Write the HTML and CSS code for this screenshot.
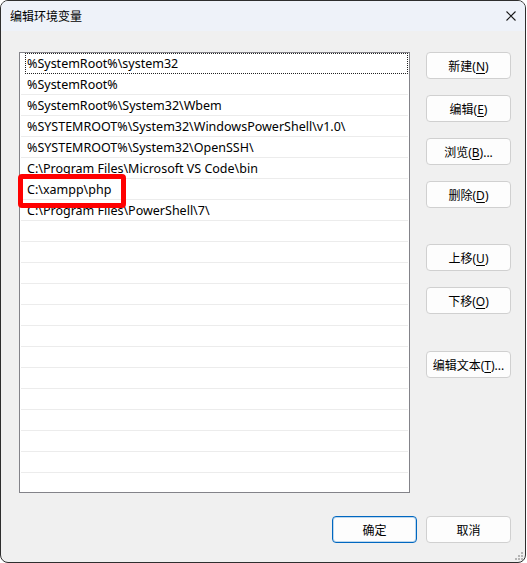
FILE: index.html
```html
<!DOCTYPE html>
<html lang="zh-CN">
<head>
    <meta charset="UTF-8">
    <title>编辑环境变量</title>
    <link rel="stylesheet" href="styles.css">
</head>
<body>
    <div class="window">
        <div class="titlebar">
            <span class="title">编辑环境变量</span>
            <svg class="close" width="10" height="10" viewBox="0 0 10 10">
                <path d="M0.5 0.5 L9.5 9.5 M9.5 0.5 L0.5 9.5" stroke="#1a1a1a" stroke-width="1.1" fill="none"/>
            </svg>
        </div>

        <div class="content">
            <div class="main">
                <div class="list">
                    <div class="row focused">%SystemRoot%\system32</div>
                    <div class="row">%SystemRoot%</div>
                    <div class="row">%SystemRoot%\System32\Wbem</div>
                    <div class="row">%SYSTEMROOT%\System32\WindowsPowerShell\v1.0\</div>
                    <div class="row">%SYSTEMROOT%\System32\OpenSSH\</div>
                    <div class="row">C:\Program Files\Microsoft VS Code\bin</div>
                    <div class="row">C:\xampp\php</div>
                    <div class="row">C:\Program Files\PowerShell\7\</div>
                    <div class="row"></div>
                    <div class="row"></div>
                    <div class="row"></div>
                    <div class="row"></div>
                    <div class="row"></div>
                    <div class="row"></div>
                    <div class="row"></div>
                    <div class="row"></div>
                    <div class="row"></div>
                    <div class="row"></div>
                    <div class="row"></div>
                    <div class="row"></div>
                    <div class="row last"></div>
                </div>

                <div class="side">
                    <button class="btn">新建(<u>N</u>)</button>
                    <button class="btn">编辑(<u>E</u>)</button>
                    <button class="btn">浏览(<u>B</u>)...</button>
                    <button class="btn">删除(<u>D</u>)</button>
                    <button class="btn move-up">上移(<u>U</u>)</button>
                    <button class="btn">下移(<u>O</u>)</button>
                    <button class="btn edit-text">编辑文本(<u>T</u>)...</button>
                </div>
            </div>

            <div class="footer">
                <button class="btn default">确定</button>
                <button class="btn">取消</button>
            </div>
        </div>

        <!-- annotation around the php entry -->
        <div class="highlight"></div>

        <svg class="grip" width="8" height="8" viewBox="0 0 8 8">
            <rect x="6" y="0" width="2" height="2" fill="#b5b5b5"/>
            <rect x="3" y="3" width="2" height="2" fill="#b5b5b5"/>
            <rect x="6" y="3" width="2" height="2" fill="#b5b5b5"/>
            <rect x="0" y="6" width="2" height="2" fill="#b5b5b5"/>
            <rect x="3" y="6" width="2" height="2" fill="#b5b5b5"/>
            <rect x="6" y="6" width="2" height="2" fill="#b5b5b5"/>
        </svg>
    </div>
</body>
</html>
```

FILE: styles.css
```css
* {
    box-sizing: border-box;
}

body {
    margin: 0;
    background: #ffffff;
    font-family: "Noto Sans", "Noto Sans CJK SC", sans-serif;
    font-size: 12px;
    color: #000;
}

.window {
    position: relative;
    width: 526px;
    height: 563px;
    border: 1px solid #2e2e2e;
    border-radius: 8px;
    background: #f0f0f0;
    overflow: hidden;
}

.titlebar {
    height: 30px;
    background: #eef2f9;
    display: flex;
    align-items: center;
    justify-content: space-between;
    padding: 0 9px 0 9px;
}

.title {
    font-size: 12px;
    color: #000;
}

.close {
    display: block;
}

.content {
    padding: 21px 14px 0 18px;
}

.main {
    display: flex;
    gap: 16px;
}

.list {
    width: 392px;
    height: 441px;
    border: 1px solid #838389;
    background: #fff;
    overflow: hidden;
}

.row {
    height: 21px;
    line-height: 21px;
    margin: 0 1px;
    padding-left: 6px;
    border-bottom: 1px solid #ececec;
    font-size: 12.5px;
    white-space: nowrap;
}

.row.last {
    border-bottom: none;
}

.row.focused {
    margin-left: 5px;
    padding-left: 1px;
    border: 1px dotted #222;
    line-height: 20px;
}

.side {
    display: flex;
    flex-direction: column;
}

.btn {
    width: 85px;
    height: 27px;
    border: 1px solid #d0d0d0;
    border-radius: 4px;
    background: #fdfdfd;
    font-family: inherit;
    font-size: 12px;
    color: #000;
    padding: 0;
    margin-bottom: 16px;
}

.btn u {
    text-underline-offset: 2px;
}

.move-up {
    margin-top: 20px;
}

.edit-text {
    margin-top: 21px;
}

.footer {
    display: flex;
    justify-content: flex-end;
    gap: 9px;
    margin-top: 23px;
}

.footer .btn {
    margin-bottom: 0;
}

.btn.default {
    border-color: #0067c0;
    box-shadow: inset 0 0 0 1px rgba(0, 103, 192, 0.25);
}

.highlight {
    position: absolute;
    left: 17px;
    top: 173px;
    width: 108px;
    height: 34px;
    border: 5px solid #ff0000;
    border-radius: 4px;
}

.grip {
    position: absolute;
    right: 2px;
    bottom: 2px;
}
```
